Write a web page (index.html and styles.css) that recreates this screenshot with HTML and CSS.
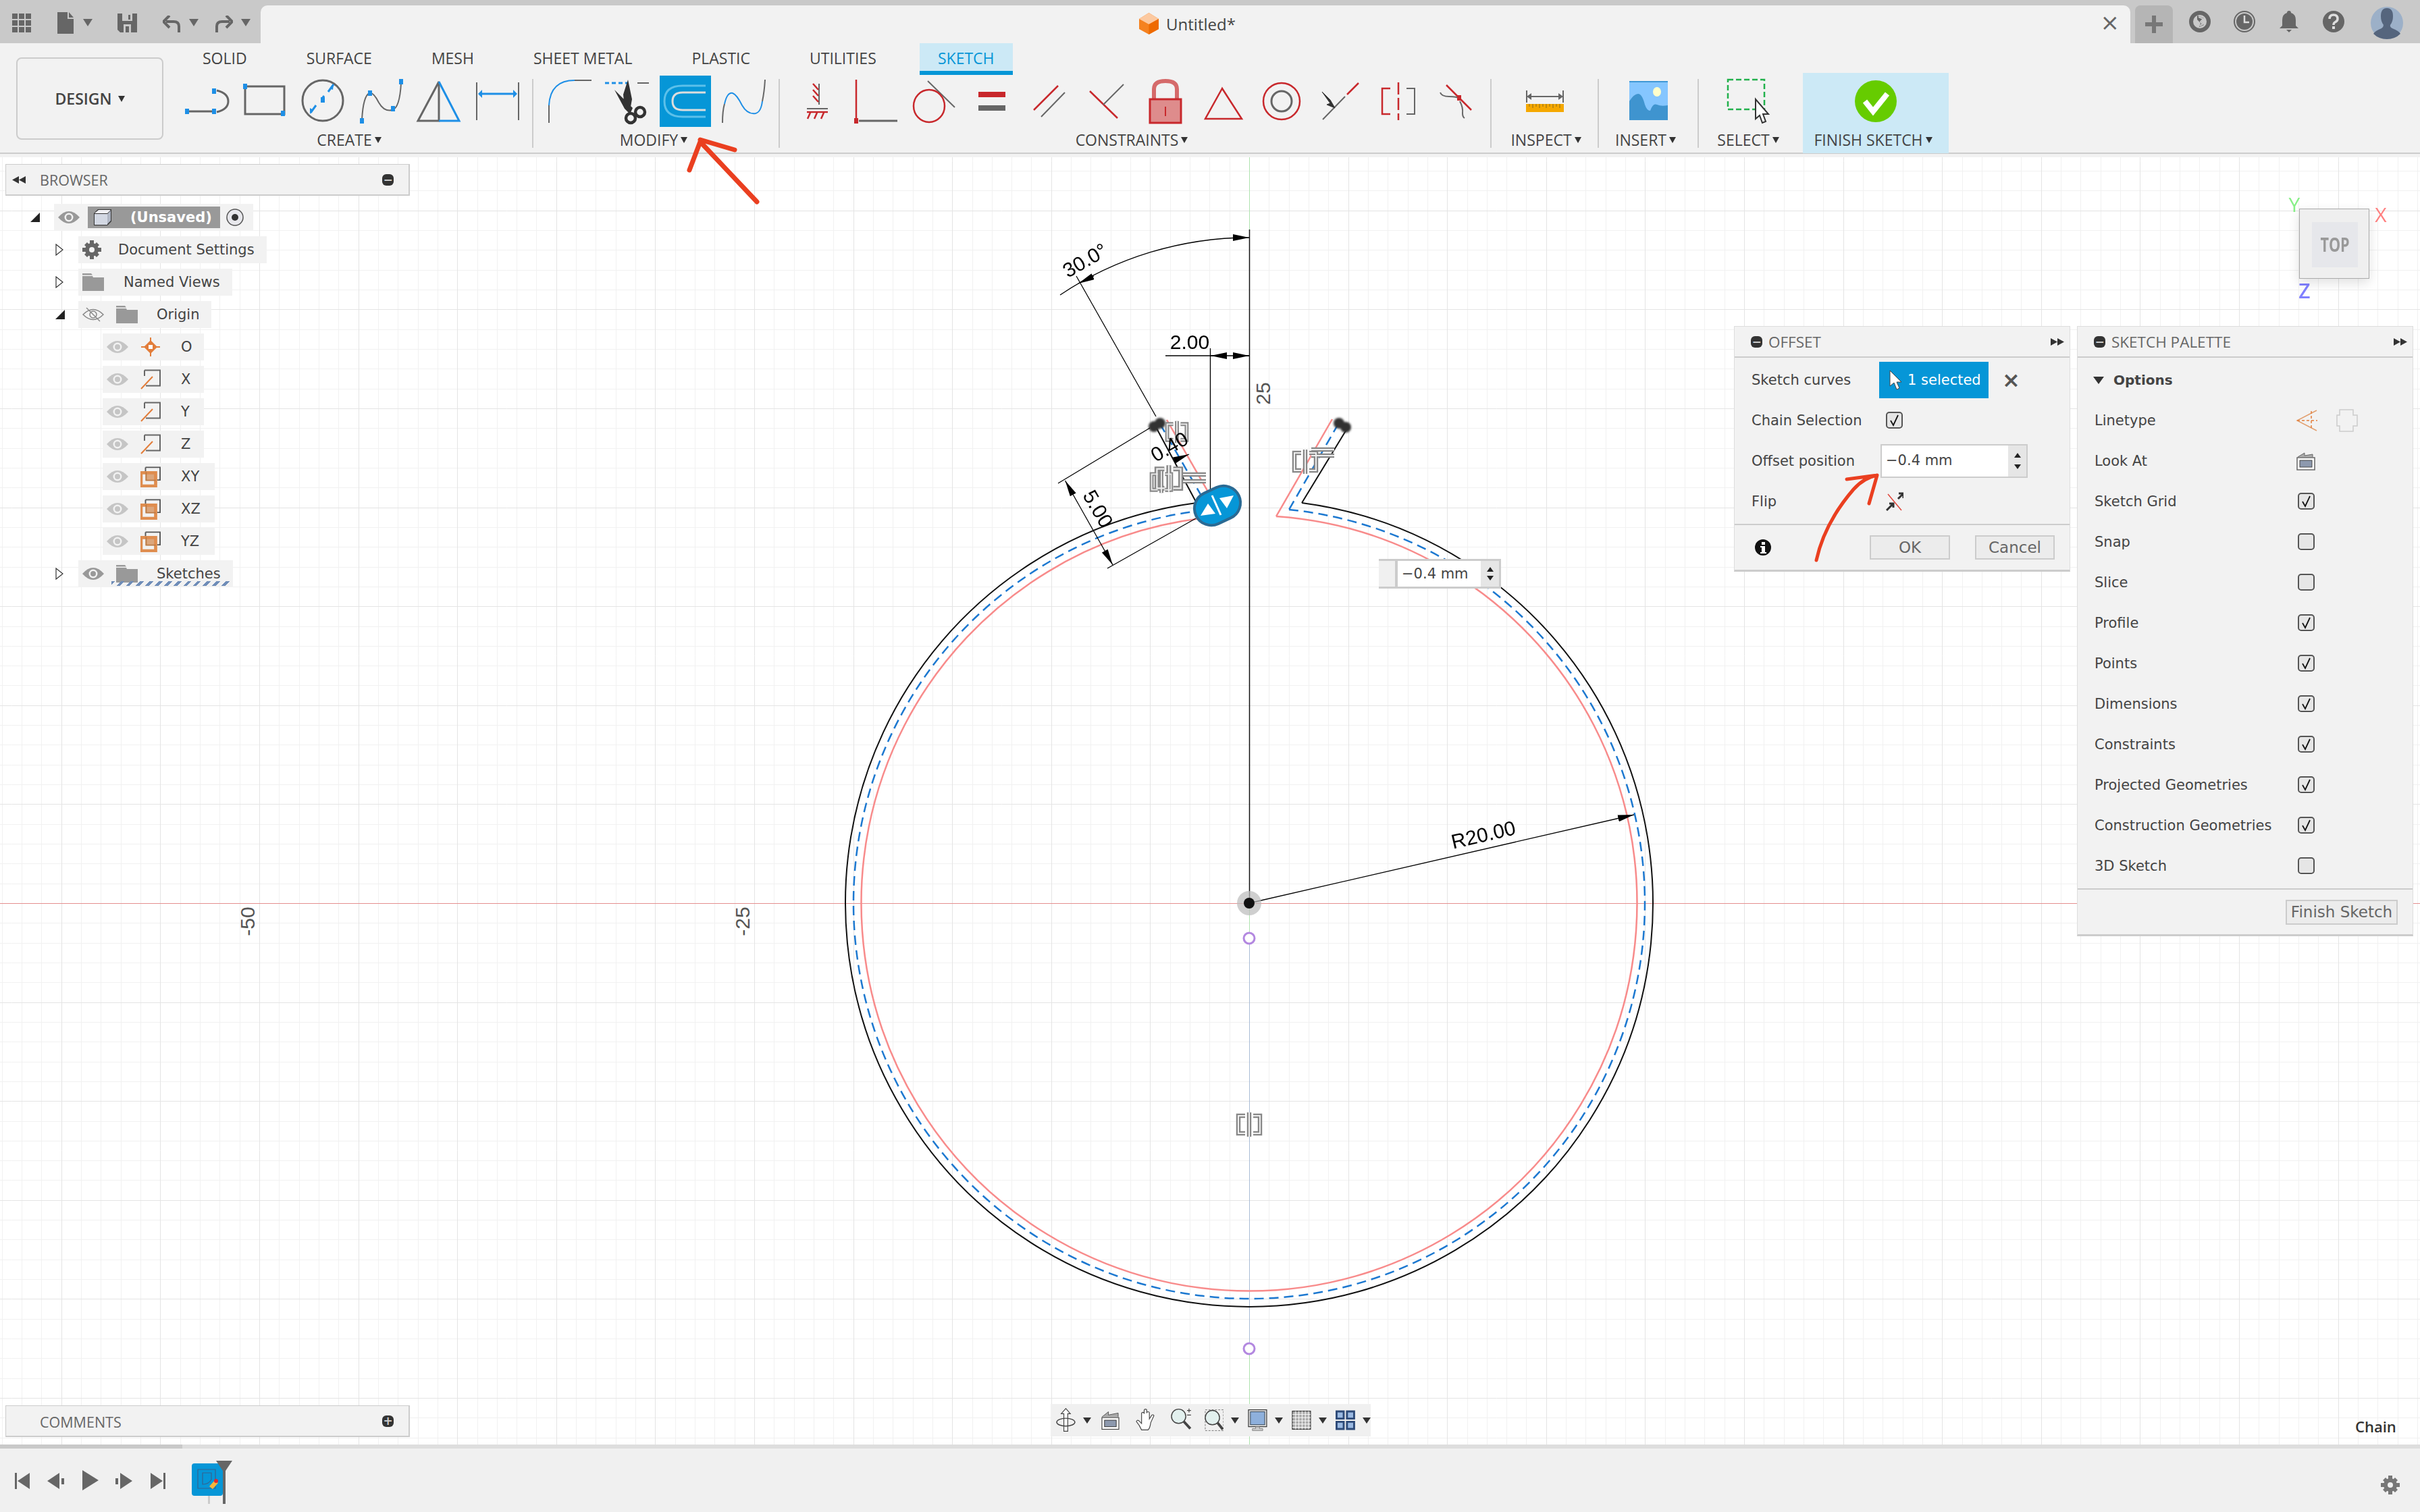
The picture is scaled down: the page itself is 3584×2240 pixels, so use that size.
FILE: index.html
```html
<!DOCTYPE html>
<html lang="en">
<head>
    <meta charset="UTF-8">
    <title>Untitled* - Sketch</title>
    <link rel="stylesheet" href="styles.css">
</head>
<body>
    <svg class="sprite" xmlns="http://www.w3.org/2000/svg">
        <symbol id="eye" viewBox="0 0 32 20"><path d="M0 10Q16-8 32 10Q16 28 0 10Z" fill="currentColor"/><circle cx="16" cy="10" r="6.500" fill="#f2f2f2"/><circle cx="16" cy="10" r="4" fill="currentColor"/></symbol>
        <symbol id="folder" viewBox="0 0 32 26"><path d="M0 0h13l2 2.500H0zM0 4h15l1 2h16v20H0z" fill="#999"/></symbol>
        <symbol id="axis" viewBox="0 0 30 30"><path d="M6 1.500h23v23H8" fill="none" stroke="#666" stroke-width="2"/><path d="M6 1.500V10" fill="none" stroke="#666" stroke-width="2"/><path d="M1 29L18 11" stroke="#e27d3a" stroke-width="2"/></symbol>
        <symbol id="plane" viewBox="0 0 32 32"><path d="M8 1.500h23v20h-5M8 1.500V8" fill="none" stroke="#555" stroke-width="2"/><rect x="8" y="8" width="16" height="14" fill="#dba67c"/><rect x="1" y="10" width="23" height="21" fill="none" stroke="#df8d4f" stroke-width="5"/><path d="M9 9v13h15" fill="none" stroke="#bb7a45" stroke-width="2"/></symbol>
        <symbol id="check" viewBox="0 0 25 25"><path d="M7 13l4 7 7-15" fill="none" stroke="#111" stroke-width="1.800"/></symbol>
        <symbol id="skip" viewBox="0 0 12 12"><path d="M6 1L0 6l6 5zM12 1L6 6l6 5z" fill="#333"/></symbol>
    </svg>

    <div class="titlebar">
        <div class="quick">
            <svg class="q-grid" width="28" height="28" viewBox="0 0 28 28"><path d="M0 0h8v8H0zM10 0h8v8h-8zM20 0h8v8h-8zM0 10h8v8H0zM10 10h8v8h-8zM20 10h8v8h-8zM0 20h8v8H0zM10 20h8v8h-8zM20 20h8v8h-8z" fill="#666"/></svg>
            <svg class="q-file" width="26" height="32" viewBox="0 0 26 32"><path d="M0 0h15v10h9v22H0zM17 0l7 8h-7z" fill="#666"/></svg>
            <span class="caret"></span>
            <svg class="q-save" width="29" height="28" viewBox="0 0 29 28"><path d="M0 0h29v28H4l-4-4z" fill="#666"/><path d="M7 0h15v11H7zM9 16h11v12h-3V19h-5v9H9z" fill="#c9c9c9"/><rect x="16" y="2" width="3" height="7" fill="#666"/></svg>
            <svg class="q-undo" width="27" height="26" viewBox="0 0 27 26"><path d="M24 25V16q0-7-8-7H5" fill="none" stroke="#666" stroke-width="4"/><path d="M10 0L1 9l9 9" fill="none" stroke="#666" stroke-width="4"/></svg>
            <span class="caret"></span>
            <svg class="q-redo" width="27" height="26" viewBox="0 0 27 26"><path d="M3 25V16q0-7 8-7h11" fill="none" stroke="#666" stroke-width="4"/><path d="M17 0l9 9-9 9" fill="none" stroke="#666" stroke-width="4"/></svg>
            <span class="caret"></span>
        </div>
        <div class="doc-tab">
            <span></span>
            <div class="doc-title">
                <svg width="29" height="32" viewBox="0 0 29 32"><path d="M14.500 0L29 9v15l-14.500 8L0 24V9z" fill="#f58220"/><path d="M14.500 0L29 9l-14.500 8L0 9z" fill="#fcc9a0"/><path d="M14.500 17L29 9v15l-14.500 8z" fill="#ee6a00"/></svg>
                <span>Untitled*</span>
            </div>
            <span class="doc-close">×</span>
        </div>
        <div class="title-right">
            <div class="plus-tab"><svg width="26" height="26" viewBox="0 0 26 26"><path d="M10 0h6v10h10v6H16v10h-6V16H0v-6h10z" fill="#777"/></svg></div>
            <svg class="t-icon t-first" width="32" height="32" viewBox="0 0 32 32"><circle cx="16" cy="16" r="13" fill="none" stroke="#666" stroke-width="6"/><path d="M12 7l10 4-4 5 4 5-7 3 2-6-5-5z" fill="#666"/><path d="M14 9l7 3-4 4 3 4-4 2" fill="none" stroke="#c9c9c9" stroke-width="2"/></svg>
            <svg class="t-icon" width="32" height="32" viewBox="0 0 32 32"><circle cx="16" cy="16" r="15" fill="none" stroke="#666" stroke-width="2"/><circle cx="16" cy="16" r="12" fill="#666"/><path d="M16 7v10h7" fill="none" stroke="#ddd" stroke-width="2.500"/></svg>
            <svg class="t-icon" width="32" height="32" viewBox="0 0 32 32"><path d="M16 0q3 0 3 3 7 2 7 11v8l4 4H2l4-4v-8q0-9 7-11 0-3 3-3zM12 28h8l-4 4z" fill="#666"/></svg>
            <svg class="t-icon" width="32" height="32" viewBox="0 0 32 32"><circle cx="16" cy="16" r="16" fill="#666"/><path d="M10 12q0-6 6-6t6 6q0 3-4 5-2 1-2 4" fill="none" stroke="#ddd" stroke-width="3.500"/><rect x="14" y="23" width="4" height="4" fill="#ddd"/></svg>
            <svg class="t-avatar" width="48" height="48" viewBox="0 0 48 48"><circle cx="24" cy="24" r="24" fill="#9cb0c8"/><path d="M15 14q0-12 9-12t9 12q0 8-4 13-1 3 3 5 10 4 12 8-8 8-20 8T4 40q2-4 12-8 3-2 3-5-4-5-4-13z" fill="#55657d"/></svg>
        </div>
    </div>

    <div class="toolbar">
        <button class="design-btn">DESIGN<span class="caret caret-dark"></span></button>
        <div class="toolbar-main">
            <div class="tabs">
                <span class="tab">SOLID</span>
                <span class="tab">SURFACE</span>
                <span class="tab">MESH</span>
                <span class="tab">SHEET METAL</span>
                <span class="tab">PLASTIC</span>
                <span class="tab">UTILITIES</span>
                <span class="tab tab-active">SKETCH</span>
            </div>
            <div class="ribbon">
                <div class="group group-create">
                    <div class="tools">
                        <div class="tool"><svg class="ico" viewBox="0 0 76 76"><path class="ln" d="M9 53h40M53 22Q70 26 70 38T53 54"/><path class="sq" d="M6 49h6v8H6zM46 49h6v8h-6zM46 19h6v8h-6z"/></svg></div>
                        <div class="tool"><svg class="ico" viewBox="0 0 76 76"><path class="ln" d="M12 16h55v41H9V18"/><path class="sq" d="M6 12h6v8H6zM62 52h6v8h-6z"/></svg></div>
                        <div class="tool"><svg class="ico" viewBox="0 0 76 76"><circle class="ln" cx="38" cy="37" r="30"/><path class="bl" d="M20 55l8-11M36 35l4-5M46 24l8-11"/><path class="sq" d="M35 32h6v8h-6zM19 48l5 3-5 6zM48 19l6-6-1 8z"/></svg></div>
                        <div class="tool"><svg class="ico" viewBox="0 0 76 76"><path class="ln ln-thin" d="M10 65Q12 30 21 26q6-2 14 14 8 14 20 11 11-3 13-40"/><path class="sq" d="M7 63h6v8H7zM19 22h6v8h-6zM53 45h6v8h-6zM65 5h6v8h-6z"/></svg></div>
                        <div class="tool"><svg class="ico" viewBox="0 0 76 76"><path class="ln" d="M38 9L7 67h31zM38 9v58"/><path class="bl" d="M38 9l30 58H38"/></svg></div>
                        <div class="tool"><svg class="ico" viewBox="0 0 76 76"><path class="ln ln-thin" d="M8 10v56M70 10v56"/><path class="bl" d="M14 27h50"/><path class="sq" d="M10 27l6-6v12zM68 27l-6-6v12z"/></svg></div>
                    </div>
                    <div class="group-label">CREATE<span class="caret caret-dark"></span></div>
                </div>
                <div class="sep sep-create"></div>
                <div class="group group-modify">
                    <div class="tools">
                        <div class="tool"><svg class="ico" viewBox="0 0 76 76"><path class="ln ln-thin" d="M46 7h25M8 44v26"/><path class="bl bl-thin" d="M46 7Q10 7 8 44"/></svg></div>
                        <div class="tool"><svg class="ico" viewBox="0 0 76 76"><path class="bl" stroke-dasharray="6 4" d="M5 11h34"/><path class="ln ln-thin" d="M53 11h17"/><path d="M39 6l6 29-3 17-8-4-2-20zM19 21l27 27-4 9-8-8z" fill="#333"/><circle cx="43" cy="63" r="7" fill="none" stroke="#333" stroke-width="4.500"/><circle cx="57" cy="54" r="7" fill="none" stroke="#333" stroke-width="4.500"/></svg></div>
                        <div class="tool"><svg class="ico active" viewBox="0 0 76 76"><path d="M68 15H34Q7 15 7 38T34 61h34" fill="none" stroke="#5cc0ea" stroke-width="3"/><path d="M68 25H34Q19 25 19 38T34 51h34" fill="none" stroke="#ddd" stroke-width="3"/></svg></div>
                        <div class="tool"><svg class="ico" viewBox="0 0 76 76"><path class="ln ln-thin" d="M7 70Q7 52 10 42M66 38Q69 24 70 6"/><path class="bl bl-thin" d="M10 42Q14 24 22 26q6 2 14 18 8 14 20 12 8-2 10-18"/></svg></div>
                    </div>
                    <div class="group-label">MODIFY<span class="caret caret-dark"></span></div>
                </div>
                <div class="sep sep-modify"></div>
                <div class="group group-constraints">
                    <div class="tools">
                        <div class="tool"><svg class="ico" viewBox="0 0 76 76"><path class="ln ln-thin" d="M41 12v31M23 49h31"/><path class="rd" d="M32 12l8 9M32 21l8 9M32 30l8 9M23 54h31M28 55l-4 9M38 55l-4 9M48 55l-4 9"/></svg></div>
                        <div class="tool"><svg class="ico" viewBox="0 0 76 76"><path class="rd" d="M10 6v58"/><path class="ln" d="M14 67h57"/><path d="M7 63h6v8H7z" fill="#c8282c"/></svg></div>
                        <div class="tool"><svg class="ico" viewBox="0 0 76 76"><path class="ln ln-thin" d="M30 8l40 39"/><ellipse class="rd" cx="32" cy="45" rx="23" ry="24"/></svg></div>
                        <div class="tool"><svg class="ico" viewBox="0 0 76 76"><path d="M19 24h40v8H19z" fill="#c8282c"/><path d="M19 44h40v8H19z" fill="#666"/></svg></div>
                        <div class="tool"><svg class="ico" viewBox="0 0 76 76"><path class="rd" d="M15 51l36-36"/><path class="ln ln-thin" d="M26 61l35-36"/></svg></div>
                        <div class="tool"><svg class="ico" viewBox="0 0 76 76"><path class="rd" d="M12 23l41 40"/><path class="ln ln-thin" d="M32 43l30-30"/></svg></div>
                        <div class="tool"><svg class="ico" viewBox="0 0 76 76"><path d="M21 34V20q0-12 17-12t17 12v14" fill="none" stroke="#d56a6a" stroke-width="6"/><path d="M15 35h46v35H15z" fill="#de8c8c" stroke="#c8282c" stroke-width="3"/><path d="M38 46v14" stroke="#c8282c" stroke-width="2"/></svg></div>
                        <div class="tool"><svg class="ico" viewBox="0 0 76 76"><path class="rd" d="M36 19L11 64h54z"/></svg></div>
                        <div class="tool"><svg class="ico" viewBox="0 0 76 76"><circle class="rd" cx="38" cy="38" r="27"/><circle class="ln" cx="38" cy="38" r="15"/></svg></div>
                        <div class="tool"><svg class="ico" viewBox="0 0 76 76"><path class="rd" d="M49 28l17-17"/><path class="ln ln-thin" d="M13 65l33-34"/><path d="M12 24l12 12 7 12-12-5 5-2z" fill="#333" stroke="#333"/></svg></div>
                        <div class="tool"><svg class="ico" viewBox="0 0 76 76"><path class="rd" stroke-dasharray="18 5" d="M39 10v56"/><path class="rd" d="M27 19H15v38h12"/><path class="ln ln-thin" d="M51 19h12v38H51"/></svg></div>
                        <div class="tool"><svg class="ico" viewBox="0 0 76 76"><path class="rd" d="M24 14l37 37"/><path class="ln ln-thin" d="M15 25q2 6 13 6 12 0 15 3M44 38q5 9 4 18 0 5 3 7"/><path d="M40 29h6v8h-6z" fill="#c8282c"/></svg></div>
                    </div>
                    <div class="group-label">CONSTRAINTS<span class="caret caret-dark"></span></div>
                </div>
                <div class="sep sep-constraints"></div>
                <div class="group group-inspect">
                    <div class="tools">
                        <div class="tool"><svg class="ico" viewBox="0 0 76 76"><path class="ln ln-thin" d="M11 22v18M65 22v18M16 31h44"/><path d="M11 31l7-5v10zM65 31l-7-5v10z" fill="#666"/><path d="M10 42h56v12H10z" fill="#f5a800"/><path d="M15 42v4M20 42v6M25 42v4M30 42v6M35 42v4M40 42v6M45 42v4M50 42v6M55 42v4M60 42v6" stroke="#8a6a20" stroke-width="1"/></svg></div>
                    </div>
                    <div class="group-label">INSPECT<span class="caret caret-dark"></span></div>
                </div>
                <div class="sep"></div>
                <div class="group group-insert">
                    <div class="tools">
                        <div class="tool"><svg class="ico" viewBox="0 0 76 76"><path d="M10 8h57v58H10z" fill="#85c6ff"/><path d="M10 8h57v2H10z" fill="#3e97d5"/><ellipse cx="51" cy="24" rx="6" ry="7" fill="#ffffcc"/><path d="M10 66V38q7-11 13-11t10 16q3 9 8 9 4-12 10-9 6 3 16 1v22z" fill="#3f94cf"/></svg></div>
                    </div>
                    <div class="group-label">INSERT<span class="caret caret-dark"></span></div>
                </div>
                <div class="sep"></div>
                <div class="group group-select">
                    <div class="tools">
                        <div class="tool"><svg class="ico" viewBox="0 0 76 76"><path d="M4 6h54v44H4z" fill="none" stroke="#22b14c" stroke-width="2.500" stroke-dasharray="8 4"/><path d="M45 35v29l6-5 4 11 5-2-4-11h8z" fill="#fff" stroke="#333" stroke-width="2"/></svg></div>
                    </div>
                    <div class="group-label">SELECT<span class="caret caret-dark"></span></div>
                </div>
                <div class="group group-finish">
                    <div class="tools">
                        <div class="tool"><svg class="ico" viewBox="0 0 76 76"><circle cx="38" cy="38" r="31" fill="#66cc00"/><path d="M22 38l12 15 21-26" fill="none" stroke="#fff" stroke-width="8"/></svg></div>
                    </div>
                    <div class="group-label">FINISH SKETCH<span class="caret caret-dark"></span></div>
                </div>
            </div>
        </div>
    </div>

    <div class="viewport">
        <svg class="canvas" width="3584" height="1907" viewBox="0 233 3584 1907">
            <defs>
                <pattern id="grid" patternUnits="userSpaceOnUse" x="1850" y="1338" width="733" height="733">
                    <path class="grid-minor" d="M29.500 0V733M59.500 0V733M88.500 0V733M117.500 0V733M176.500 0V733M205.500 0V733M235.500 0V733M264.500 0V733M323.500 0V733M352.500 0V733M381.500 0V733M410.500 0V733M469.500 0V733M498.500 0V733M528.500 0V733M557.500 0V733M616.500 0V733M645.500 0V733M674.500 0V733M704.500 0V733M0 29.500H733M0 59.500H733M0 88.500H733M0 117.500H733M0 176.500H733M0 205.500H733M0 235.500H733M0 264.500H733M0 323.500H733M0 352.500H733M0 381.500H733M0 410.500H733M0 469.500H733M0 498.500H733M0 528.500H733M0 557.500H733M0 616.500H733M0 645.500H733M0 674.500H733M0 704.500H733"/>
                    <path class="grid-major" d="M0.500 0V733M147.500 0V733M293.500 0V733M440.500 0V733M586.500 0V733M0 0.500H733M0 147.500H733M0 293.500H733M0 440.500H733M0 586.500H733"/>
                </pattern>
                <marker id="tip" markerUnits="userSpaceOnUse" markerWidth="24" markerHeight="10" refX="24" refY="5" orient="auto-start-reverse"><path d="M0 0L24 5L0 10z" fill="#000"/></marker>
                <filter id="soft"><feGaussianBlur stdDeviation="1.500"/></filter>
                <filter id="soft-glyph"><feGaussianBlur stdDeviation=".6"/></filter>
                <g id="glyph-bracket">
                    <path d="M-6 -13h-10v26h10M6 -13h10v26H6M0 -18v36"/>
                </g>
                <g id="glyph-set">
                    <use href="#glyph-bracket" transform="translate(1743 640) scale(.9)"/>
                    <use href="#glyph-bracket" transform="translate(1731 709) scale(1.100)"/>
                    <use href="#glyph-bracket" transform="translate(1720 714) scale(.9)"/>
                    <use href="#glyph-bracket" transform="translate(1933 684)"/>
                    <use href="#glyph-bracket" transform="translate(1850 1666)"/>
                    <path d="M1752 703h34M1752 713h34M1942 666h34M1942 675h34"/>
                </g>
            </defs>
            <rect x="0" y="233" width="3584" height="1907" fill="url(#grid)"/>

            <path class="axis-x" d="M0 1338.500H3584"/>
            <path class="axis-y" d="M1850.500 233V2140"/>
            <path class="axis-line" d="M1850.500 340V1338"/>
            <path class="axis-guide" d="M1850.500 1398V1990"/>

            <text class="axis-label" transform="translate(366 1365) rotate(-90)">-50</text>
            <text class="axis-label" transform="translate(1099 1365) rotate(-90)">-25</text>
            <text class="axis-label" transform="translate(1870 583) rotate(-90)">25</text>

            <path class="curve-red" d="M1728 622L1810 765M1973 621L1890 765M1890 765A574.500 574.500 0 1 1 1810 765"/>
            <path class="curve-blue" d="M1718 628L1791 755M1982 628L1909 755M1909 755A586 586 0 1 1 1791 755"/>
            <path class="curve-black" d="M1711 631L1772 745M1995 635L1928 745M1928 745A598 598 0 1 1 1772 745"/>

            <g filter="url(#soft)" fill="#333">
                <circle cx="1709" cy="632" r="8"/><circle cx="1718" cy="627" r="8"/>
                <circle cx="1983" cy="627" r="8"/><circle cx="1993" cy="633" r="8"/>
            </g>

            <g filter="url(#soft-glyph)">
                <use class="glyphs-out" href="#glyph-set"/>
                <use class="glyphs-in" href="#glyph-set"/>
            </g>

            <path class="dim" d="M1570 437A504 504 0 0 1 1850 352" marker-end="url(#tip)"/>
            <path class="dim" d="M1594 409L1712 617"/>
            <path class="dim" d="M1620 409L1597 420" marker-end="url(#tip)"/>
            <text class="dim-text" transform="translate(1607 386) rotate(-30)" dy="10">30.0°</text>
            <path class="dim" d="M1726 527H1850"/>
            <path class="dim dim-thin" d="M1792.500 516V727"/>
            <path class="dim" d="M1816 527L1793 527" marker-end="url(#tip)"/>
            <path class="dim" d="M1827 527L1850 527" marker-end="url(#tip)"/>
            <text class="dim-text" x="1762" y="517">2.00</text>
            <path class="dim" d="M1648 837L1577.500 712" marker-start="url(#tip)" marker-end="url(#tip)"/>
            <path class="dim" d="M1567 716L1703 634M1640 842L1771 768"/>
            <text class="dim-text" transform="translate(1626 754) rotate(60)" dy="10">5.00</text>
            <text class="dim-text" transform="translate(1732 662) rotate(-30)" dy="10">0.40</text>
            <path class="dim" d="M1739 682L1761 673" marker-end="url(#tip)"/>
            <path class="dim" d="M1850 1338L2420 1207" marker-end="url(#tip)"/>
            <text class="dim-text" transform="translate(2197 1237) rotate(-13)" dy="10">R20.00</text>

            <g>
                <rect x="-35" y="-25" width="70" height="50" rx="25" fill="#0696d7" stroke="#2b6a93" stroke-width="4" transform="translate(1803 749) rotate(-25)"/>
                <path d="M1795 734L1808 763" stroke="#fff" stroke-width="3"/>
                <path d="M1789 746L1778 764L1800 761z" fill="#fff"/>
                <path d="M1817 753L1806 738L1827 734z" fill="#fff"/>
            </g>

            <circle cx="1850" cy="1338" r="18" fill="#bbb" opacity=".7"/>
            <circle cx="1850" cy="1338" r="8" fill="#111"/>
            <circle cx="1850" cy="1390" r="8" class="purple-pt"/>
            <circle cx="1850" cy="1998" r="8" class="purple-pt"/>

            <g class="cube-axes">
                <text class="axis-y-label" x="3398" y="314">Y</text>
                <text class="axis-x-label" x="3526" y="329">X</text>
                <text class="axis-z-label" x="3413" y="442">Z</text>
            </g>
        </svg>

        <div class="view-cube"><div class="view-face"><span>TOP</span></div></div>

        <div class="browser">
            <div class="browser-head">
                <svg class="head-skip" width="20" height="13" viewBox="0 0 12 12" preserveAspectRatio="none"><use href="#skip"/></svg>
                <span class="head-text">BROWSER</span>
                <span class="round-btn">−</span>
            </div>
            <div class="tree">
                <div class="tree-row level0">
                    <span class="twist"><svg width="14" height="14" viewBox="0 0 14 14"><path d="M14 0V14H0z" fill="#222"/></svg></span>
                    <div class="item item-root">
                        <svg class="eye" width="32" height="20"><use href="#eye"/></svg>
                        <div class="item-selected">
                            <svg width="26" height="24" viewBox="0 0 26 24"><path d="M6 0h20v18l-6 6H0V6z" fill="#333"/><path d="M1 7h19v16H1z" fill="#d3d8e3"/><path d="M1 6l6-5h18l-5 5z" fill="#f0f0f4"/><path d="M20 7l5-5v15l-5 5z" fill="#b0b6c4"/></svg>
                            <span>(Unsaved)</span>
                        </div>
                        <svg class="radio" width="26" height="26" viewBox="0 0 26 26"><circle cx="13" cy="13" r="12" fill="#e8e8ec" stroke="#555" stroke-width="1.500"/><circle cx="13" cy="13" r="5" fill="#333"/></svg>
                    </div>
                </div>
                <div class="tree-row level1">
                    <span class="twist"><svg width="12" height="18" viewBox="0 0 12 18"><path d="M1 1V17L11 9z" fill="#fff" stroke="#333" stroke-width="1.200"/></svg></span>
                    <div class="item">
                        <svg class="gear" width="28" height="28" viewBox="0 0 28 28"><g fill="#666"><circle cx="14" cy="14" r="10"/><path d="M11 0h6v5h-6zM11 23h6v5h-6zM0 11h5v6H0zM23 11h5v6h-5zM3 7l4-4 4 4-4 4zM17 7l4-4 4 4-4 4zM3 21l4 4 4-4-4-4zM17 21l4 4 4-4-4-4z"/></g><circle cx="14" cy="14" r="4" fill="#f2f2f2"/></svg>
                        <span class="item-text">Document Settings</span>
                    </div>
                </div>
                <div class="tree-row level1">
                    <span class="twist"><svg width="12" height="18" viewBox="0 0 12 18"><path d="M1 1V17L11 9z" fill="#fff" stroke="#333" stroke-width="1.200"/></svg></span>
                    <div class="item">
                        <svg class="folder-first" width="32" height="26"><use href="#folder"/></svg>
                        <span class="item-text">Named Views</span>
                    </div>
                </div>
                <div class="tree-row level1">
                    <span class="twist"><svg width="14" height="14" viewBox="0 0 14 14"><path d="M14 0V14H0z" fill="#222"/></svg></span>
                    <div class="item">
                        <svg class="eye" width="32" height="24" viewBox="0 0 32 24"><path d="M1 12Q16-3 31 12Q16 27 1 12Z" fill="none" stroke="#888" stroke-width="1.500"/><circle cx="16" cy="12" r="5" fill="none" stroke="#888" stroke-width="1.500"/><path d="M6 2l20 20" stroke="#888" stroke-width="1.500"/></svg>
                        <svg class="folder" width="32" height="26"><use href="#folder"/></svg>
                        <span class="item-text">Origin</span>
                    </div>
                </div>
                <div class="tree-row level2">
                    <div class="item leaf">
                        <svg class="eye eye-off" width="32" height="20"><use href="#eye"/></svg>
                        <svg class="leaf-icon" width="30" height="30" viewBox="0 0 30 30"><path d="M15 1v28M1 15h28" stroke="#e27d3a" stroke-width="2"/><path d="M15 5L25 15 15 25 5 15z" fill="#e27d3a"/><rect x="12" y="12" width="6" height="6" fill="#fff"/></svg>
                        <span class="item-text">O</span>
                    </div>
                </div>
                <div class="tree-row level2">
                    <div class="item leaf">
                        <svg class="eye eye-off" width="32" height="20"><use href="#eye"/></svg>
                        <svg class="leaf-icon" width="30" height="30"><use href="#axis"/></svg>
                        <span class="item-text">X</span>
                    </div>
                </div>
                <div class="tree-row level2">
                    <div class="item leaf">
                        <svg class="eye eye-off" width="32" height="20"><use href="#eye"/></svg>
                        <svg class="leaf-icon" width="30" height="30"><use href="#axis"/></svg>
                        <span class="item-text">Y</span>
                    </div>
                </div>
                <div class="tree-row level2">
                    <div class="item leaf">
                        <svg class="eye eye-off" width="32" height="20"><use href="#eye"/></svg>
                        <svg class="leaf-icon" width="30" height="30"><use href="#axis"/></svg>
                        <span class="item-text">Z</span>
                    </div>
                </div>
                <div class="tree-row level2">
                    <div class="item leaf leaf-wide">
                        <svg class="eye eye-off" width="32" height="20"><use href="#eye"/></svg>
                        <svg class="leaf-icon" width="30" height="32"><use href="#plane"/></svg>
                        <span class="item-text">XY</span>
                    </div>
                </div>
                <div class="tree-row level2">
                    <div class="item leaf leaf-wide">
                        <svg class="eye eye-off" width="32" height="20"><use href="#eye"/></svg>
                        <svg class="leaf-icon" width="30" height="32"><use href="#plane"/></svg>
                        <span class="item-text">XZ</span>
                    </div>
                </div>
                <div class="tree-row level2">
                    <div class="item leaf leaf-wide">
                        <svg class="eye eye-off" width="32" height="20"><use href="#eye"/></svg>
                        <svg class="leaf-icon" width="30" height="32"><use href="#plane"/></svg>
                        <span class="item-text">YZ</span>
                    </div>
                </div>
                <div class="tree-row level1">
                    <span class="twist"><svg width="12" height="18" viewBox="0 0 12 18"><path d="M1 1V17L11 9z" fill="#fff" stroke="#333" stroke-width="1.200"/></svg></span>
                    <div class="item item-wavy">
                        <svg class="eye" width="32" height="20"><use href="#eye"/></svg>
                        <svg class="folder" width="32" height="26"><use href="#folder"/></svg>
                        <span class="item-text">Sketches</span>
                    </div>
                </div>
            </div>
        </div>

        <div class="comments">
            <span class="head-text">COMMENTS</span>
            <span class="round-btn">+</span>
        </div>

        <div class="panel panel-offset">
            <div class="panel-head">
                <span class="round-btn">−</span>
                <span class="panel-title">OFFSET</span>
                <svg class="head-expand" width="20" height="13" viewBox="0 0 12 12" preserveAspectRatio="none"><use href="#skip" transform="translate(12 0) scale(-1 1)"/></svg>
            </div>
            <div class="panel-body">
                <div class="form-row">
                    <span class="form-label">Sketch curves</span>
                    <div class="selected-btn">
                        <svg width="20" height="30" viewBox="0 0 20 30"><path d="M2 1v23l6-5 4 10 4-2-4-9h7z" fill="#fff" stroke="#444" stroke-width="1"/></svg>
                        <span>1 selected</span>
                    </div>
                    <span class="clear-x">×</span>
                </div>
                <div class="form-row">
                    <span class="form-label">Chain Selection</span>
                    <span class="checkbox check-offset"><svg width="25" height="25"><use href="#check"/></svg></span>
                </div>
                <div class="form-row">
                    <span class="form-label">Offset position</span>
                    <div class="num-input">
                        <span class="num-value">−0.4 mm</span>
                        <div class="spinner"><span class="spin-up"></span><span class="spin-down"></span></div>
                    </div>
                </div>
                <div class="form-row">
                    <span class="form-label">Flip</span>
                    <svg class="flip" width="26" height="28" viewBox="0 0 26 28"><path d="M1 27l9-9M5 17h6v6M25 3l-7 7M19 2h7v7" fill="none" stroke="#333" stroke-width="3"/><path d="M3 3l20 24" stroke="#e0453a" stroke-width="1.500"/></svg>
                </div>
            </div>
            <div class="panel-foot panel-foot-offset">
                <svg class="info" width="24" height="24" viewBox="0 0 24 24"><circle cx="12" cy="12" r="12" fill="#111"/><rect x="10" y="4" width="5" height="4" fill="#fff"/><path d="M8 10h7v9h2v2H8v-2h2v-7H8z" fill="#fff"/></svg>
                <button class="btn btn-ok">OK</button>
                <button class="btn btn-cancel">Cancel</button>
            </div>
        </div>

        <div class="panel panel-palette">
            <div class="panel-head">
                <span class="round-btn">−</span>
                <span class="panel-title">SKETCH PALETTE</span>
                <svg class="head-expand" width="20" height="13" viewBox="0 0 12 12" preserveAspectRatio="none"><use href="#skip" transform="translate(12 0) scale(-1 1)"/></svg>
            </div>
            <div class="panel-body">
                <div class="form-row palette-row options-row"><span class="options-tri"></span><b>Options</b></div>
                <div class="form-row palette-row"><span class="form-label">Linetype</span>
                    <svg class="linetype" width="34" height="34" viewBox="0 0 34 34"><path d="M32 2L3 17l29 15" fill="none" stroke="#e2a070" stroke-width="1.500"/><path d="M3 17h30M24 3v28" fill="none" stroke="#e27d3a" stroke-width="1.500" stroke-dasharray="4 3"/></svg>
                    <svg class="linetype linetype-2" width="34" height="34" viewBox="0 0 34 34"><path d="M6 1h20v8h6v16h-6v8H6v-8H2V9h4z" fill="none" stroke="#ccc" stroke-width="1.500"/></svg>
                </div>
                <div class="form-row palette-row"><span class="form-label">Look At</span>
                    <svg class="lookat" width="28" height="28" viewBox="0 0 28 28"><path d="M2 8l10-6v4l12-2v4" fill="#aaa" stroke="#666"/><rect x="1" y="9" width="26" height="18" fill="#fff" stroke="#666" stroke-width="1.500"/><rect x="5" y="13" width="18" height="10" fill="#8d99ae" stroke="#444"/></svg>
                </div>
                <div class="form-row palette-row"><span class="form-label">Sketch Grid</span><span class="checkbox"><svg width="25" height="25"><use href="#check"/></svg></span></div>
                <div class="form-row palette-row"><span class="form-label">Snap</span><span class="checkbox"></span></div>
                <div class="form-row palette-row"><span class="form-label">Slice</span><span class="checkbox"></span></div>
                <div class="form-row palette-row"><span class="form-label">Profile</span><span class="checkbox"><svg width="25" height="25"><use href="#check"/></svg></span></div>
                <div class="form-row palette-row"><span class="form-label">Points</span><span class="checkbox"><svg width="25" height="25"><use href="#check"/></svg></span></div>
                <div class="form-row palette-row"><span class="form-label">Dimensions</span><span class="checkbox"><svg width="25" height="25"><use href="#check"/></svg></span></div>
                <div class="form-row palette-row"><span class="form-label">Constraints</span><span class="checkbox"><svg width="25" height="25"><use href="#check"/></svg></span></div>
                <div class="form-row palette-row"><span class="form-label">Projected Geometries</span><span class="checkbox"><svg width="25" height="25"><use href="#check"/></svg></span></div>
                <div class="form-row palette-row"><span class="form-label">Construction Geometries</span><span class="checkbox"><svg width="25" height="25"><use href="#check"/></svg></span></div>
                <div class="form-row palette-row"><span class="form-label">3D Sketch</span><span class="checkbox"></span></div>
            </div>
            <div class="panel-foot panel-foot-palette">
                <button class="btn btn-finish">Finish Sketch</button>
            </div>
        </div>

        <div class="num-input float-input">
            <span class="grip"></span>
            <span class="num-value">−0.4 mm</span>
            <div class="spinner"><span class="spin-up"></span><span class="spin-down"></span></div>
        </div>

        <div class="nav-bar">
            <svg class="nav-icon nav-orbit" width="30" height="36" viewBox="0 0 30 36"><path d="M15 0l7 8h-4v27h-6V8H8z" fill="#fff" stroke="#444" stroke-width="1.200"/><ellipse cx="15" cy="21" rx="14" ry="6" fill="none" stroke="#444" stroke-width="1.500"/></svg>
            <span class="caret caret-nav"></span>
            <svg class="nav-icon nav-look" width="28" height="30" viewBox="0 0 28 30"><path d="M1 10l10-8v5l15-3v6" fill="#aaa" stroke="#555"/><rect x="1" y="11" width="26" height="18" fill="#fff" stroke="#444" stroke-width="1.200"/><rect x="5" y="15" width="18" height="10" fill="#8d99ae" stroke="#333"/></svg>
            <svg class="nav-icon nav-hand" width="30" height="34" viewBox="0 0 30 34"><path d="M9 32Q6 25 1 19q1-3 4-1l4 4V7q0-2 2-2t2 2V2q0-2 2-2t2 2v4q0-2 2-2t2 2v9l4-6q2-1 3 1l-5 11q-1 8-4 11z" fill="#fff" stroke="#444" stroke-width="1.200"/></svg>
            <svg class="nav-icon nav-zoom" width="32" height="36" viewBox="0 0 32 36"><circle cx="12" cy="12" r="11" fill="#e2f0ee" stroke="#444" stroke-width="1.500"/><path d="M20 20l10 11" stroke="#444" stroke-width="4"/><path d="M25 3h6M28 0v6M25 10h6" stroke="#444" stroke-width="1.200"/></svg>
            <svg class="nav-icon nav-fit" width="30" height="34" viewBox="0 0 30 34"><rect x="1" y="1" width="28" height="32" fill="none" stroke="#777" stroke-dasharray="3 2"/><circle cx="12" cy="13" r="11" fill="#e2f0ee" stroke="#444" stroke-width="1.500"/><path d="M20 21l8 10" stroke="#444" stroke-width="4"/></svg>
            <span class="caret caret-nav"></span>
            <svg class="nav-icon nav-display" width="30" height="34" viewBox="0 0 30 34"><rect x="1" y="1" width="28" height="26" fill="#ddd" stroke="#333" stroke-width="1.200"/><rect x="4" y="4" width="22" height="20" fill="#8eb0dc" stroke="#345"/><path d="M12 27h6v3h5v3H7v-3h5z" fill="#ccc" stroke="#666" stroke-width=".7"/></svg>
            <span class="caret caret-nav"></span>
            <svg class="nav-icon nav-gridicon" width="30" height="30" viewBox="0 0 30 30"><rect x="1" y="1" width="28" height="28" fill="#aaa" stroke="#333" stroke-width="1.200"/><path d="M6 1v28M11 1v28M16 1v28M21 1v28M26 1v28M1 6h28M1 11h28M1 16h28M1 21h28M1 26h28" stroke="#fff"/></svg>
            <span class="caret caret-nav"></span>
            <svg class="nav-icon nav-views" width="30" height="30" viewBox="0 0 30 30"><path d="M0 0h14v14H0zM16 0h14v14H16zM0 16h14v14H0zM16 16h14v14H16z" fill="#2d4a78"/><path d="M3 3h8v8H3zM19 3h8v8h-8zM3 19h8v8H3zM19 19h8v8h-8z" fill="#9ab9e2"/></svg>
            <span class="caret caret-nav"></span>
        </div>

        <span class="mode-text">Chain</span>
    </div>

    <div class="timeline-progress"><span class="timeline-done"></span></div>
    <div class="timeline">
        <svg class="tl-btn tl-first" width="22" height="24" viewBox="0 0 22 24"><path d="M0 0h3v24H0zM22 0v24L4 12z" fill="#666"/></svg>
        <svg class="tl-btn tl-prev" width="26" height="24" viewBox="0 0 26 24"><path d="M18 0v24L0 12zM21 8h4v9h-4z" fill="#666"/></svg>
        <svg class="tl-btn tl-play" width="24" height="30" viewBox="0 0 24 30"><path d="M0 0v30L24 15z" fill="#666"/></svg>
        <svg class="tl-btn tl-next" width="26" height="24" viewBox="0 0 26 24"><path d="M8 0v24l18-12zM1 8h4v9H1z" fill="#666"/></svg>
        <svg class="tl-btn tl-last" width="22" height="24" viewBox="0 0 22 24"><path d="M19 0h3v24h-3zM0 0v24l18-12z" fill="#666"/></svg>
        <div class="tl-feature">
            <svg width="46" height="48" viewBox="0 0 46 48"><path d="M9 9h26v28H9z" fill="none" stroke="#34638f" stroke-width="1.200"/><path d="M16 14h13v10q-4 7-13 7z" fill="none" stroke="#34638f" stroke-width="1.200"/><path d="M26 34l8-9 5 4-8 9z" fill="#f5b53c"/><circle cx="36" cy="26" r="3" fill="#e6262a"/></svg>
            <span class="tl-tick"></span>
            <span class="tl-marker"></span>
        </div>
        <svg class="tl-gear" width="28" height="28" viewBox="0 0 28 28"><g fill="#777"><circle cx="14" cy="14" r="10"/><path d="M11 0h6v5h-6zM11 23h6v5h-6zM0 11h5v6H0zM23 11h5v6h-5zM3 7l4-4 4 4-4 4zM17 7l4-4 4 4-4 4zM3 21l4 4 4-4-4-4zM17 21l4 4 4-4-4-4z"/></g><circle cx="14" cy="14" r="4" fill="#f0f0f0"/></svg>
    </div>

    <svg class="annotations" width="3584" height="2240" viewBox="0 0 3584 2240">
        <path d="M1121 299L1037 210L1021 252M1037 207L1088 222"/>
        <path class="arrow-thin" d="M2690 830Q2702 775 2745 725Q2760 708 2780 704M2780 704L2735 710M2780 704L2768 746"/>
    </svg>
</body>
</html>
```
FILE: styles.css
```css
* {
    box-sizing: border-box;
}
body {
    position: relative;
    width: 3584px;
    height: 2240px;
    margin: 0;
    overflow: hidden;
    background-color: #f2f2f2;
    font-family: 'DejaVu Sans', sans-serif;
    color: #444;
}
.sprite {
    position: absolute;
    width: 0;
    height: 0;
}
.caret {
    display: inline-block;
    width: 0;
    height: 0;
    margin-left: 6px;
    border-left: 7px solid transparent;
    border-right: 7px solid transparent;
    border-top: 11px solid #666;
}
.caret-dark {
    margin-left: 4px;
    border-left-width: 5px;
    border-right-width: 5px;
    border-top: 9px solid #333;
    vertical-align: 4px;
}

/* title bar */
.titlebar {
    display: flex;
    height: 64px;
    padding-top: 8px;
    background-color: #c9c9c9;
}
.quick {
    display: flex;
    align-items: center;
    flex: none;
    width: 386px;
    height: 56px;
    padding-left: 18px;
}
.q-grid { margin-top: -4px; }
.q-file { margin-left: 39px; margin-top: -4px; }
.q-save { margin-left: 37px; margin-top: -4px; }
.q-undo { margin-left: 38px; }
.q-redo { margin-left: 24px; }
.quick .caret { margin-top: -6px; margin-left: 12px; }
.doc-tab {
    display: grid;
    grid-template-columns: 1fr auto 1fr;
    align-items: center;
    flex: none;
    width: 2769px;
    padding-right: 24px;
    background-color: #f2f2f2;
    border-top-left-radius: 10px;
    border-top-right-radius: 10px;
}
.doc-title {
    display: flex;
    align-items: center;
    gap: 11px;
    margin-top: -2px;
    font-family: 'Open Sans', sans-serif;
    font-size: 24px;
    color: #444;
}
.doc-close {
    justify-self: end;
    margin-right: -8px;
    font-size: 34px;
    line-height: 1;
    color: #666;
    margin-top: -6px;
}
.title-right {
    display: flex;
    align-items: center;
    flex: 1;
    height: 56px;
    padding-left: 7px;
}
.plus-tab {
    display: flex;
    align-items: center;
    justify-content: center;
    width: 56px;
    height: 56px;
    background-color: #b5b5b5;
    border-top-left-radius: 8px;
    border-top-right-radius: 8px;
}
.t-icon { margin-left: 34px; margin-top: -8px; }
.t-first { margin-left: 24px; }
.t-avatar { margin-left: 39px; margin-top: -4px; }

/* toolbar */
.toolbar {
    display: flex;
    height: 164px;
    margin-bottom: 5px;
    border-bottom: 2px solid #ccc;
}
.design-btn {
    flex: none;
    width: 218px;
    height: 122px;
    margin: 21px 21px 0 24px;
    font-family: 'Open Sans', sans-serif;
    font-size: 23px;
    font-weight: 600;
    color: #444;
    background-color: #f2f2f2;
    border: 2px solid #ccc;
    border-radius: 8px;
}
.design-btn .caret-dark { margin-left: 9px; }
.tabs {
    display: flex;
    gap: 40px;
    height: 47px;
    padding-left: 13px;
}
.tab {
    height: 47px;
    padding: 0 24px 0;
    font-family: 'Open Sans', sans-serif;
    font-size: 23px;
    line-height: 44px;
    color: #444;
}
.tab-active {
    width: 138px;
    padding: 0;
    text-align: center;
    color: #0696d7;
    background-color: #cce9f6;
    border-bottom: 6px solid #0696d7;
}
.ribbon {
    display: flex;
    height: 119px;
    margin-top: -3px;
}
.group {
    display: flex;
    flex-direction: column;
    align-items: center;
    padding-top: 4px;
}
.tools {
    display: flex;
}
.tool {
    display: flex;
    justify-content: center;
    width: 86px;
    height: 76px;
}
.ico {
    width: 76px;
    height: 76px;
}
.ico.active {
    background-color: #0696d7;
}
.group-label {
    margin-top: 7px;
    margin-left: -8px;
    font-family: 'Open Sans', sans-serif;
    font-size: 23px;
    line-height: 25px;
    color: #444;
    white-space: nowrap;
}
.group-constraints .group-label { margin-left: -14px; }
.group-inspect .group-label { margin-left: 4px; }
.sep {
    flex: none;
    width: 2px;
    height: 102px;
    margin-top: 9px;
    background-color: #ccc;
}
.group-create { width: 516px; margin-right: 9px; }
.group-modify { width: 344px; margin-left: 10px; margin-right: 9px; }
.group-constraints { width: 1032px; margin-left: 12px; margin-right: 8px; }
.group-inspect { width: 157px; }
.group-insert { width: 146px; }
.group-select { width: 154px; }
.group-finish { width: 216px; background-color: #cce9f6; }
.ln { fill: none; stroke: #666; stroke-width: 3; }
.ln-thin { stroke-width: 2; }
.bl { fill: none; stroke: #1e8fe6; stroke-width: 3; }
.bl-thin { stroke-width: 2; }
.sq { fill: #1e8fe6; }
.rd { fill: none; stroke: #c8282c; stroke-width: 2.5; }

/* viewport */
.viewport {
    position: relative;
    height: 1907px;
    overflow: hidden;
    background-color: #fff;
}
.canvas {
    position: absolute;
    left: 0;
    top: 0;
}
.grid-minor { stroke: #f1f1f1; stroke-width: 1; fill: none; }
.grid-major { stroke: #e4e4e4; stroke-width: 1; fill: none; }
.axis-x { stroke: #e48f8f; stroke-width: 1; }
.axis-y { stroke: #aee3ae; stroke-width: 1; }
.axis-line { stroke: #111; stroke-width: 1.5; }
.axis-guide { stroke: #a9bcd6; stroke-width: 1; }
.axis-label {
    font-family: 'Liberation Sans', sans-serif;
    font-size: 30px;
    fill: #555;
    text-anchor: middle;
    dominant-baseline: central;
}
.curve-red { fill: none; stroke: #f88b8b; stroke-width: 2.5; }
.curve-blue { fill: none; stroke: #1c78d0; stroke-width: 2.5; stroke-dasharray: 14 8; }
.curve-black { fill: none; stroke: #111; stroke-width: 2; }
.glyphs-out { fill: none; stroke: #888; stroke-width: 6.5; }
.glyphs-in { fill: none; stroke: #eee; stroke-width: 2; }
.dim { fill: none; stroke: #000; stroke-width: 1.300; }
.dim-text {
    font-family: 'Liberation Sans', sans-serif;
    font-size: 30px;
    fill: #000;
    text-anchor: middle;
}
.purple-pt { fill: #fff; stroke: #b388e0; stroke-width: 3; }
.cube-axes text {
    font-family: 'Open Sans', sans-serif;
    font-size: 30px;
    text-anchor: middle;
}
.axis-y-label { fill: #88f088; }
.axis-x-label { fill: #ff7f7f; }
.axis-z-label { fill: #8080ff; font-weight: 600; }
.view-cube {
    position: absolute;
    left: 3405px;
    top: 76px;
    width: 104px;
    height: 104px;
    padding: 19px 18px;
    background-color: #efefef;
    border: 1px solid #aaa;
    box-shadow: 0 6px 16px rgba(0, 0, 0, 0.12);
}
.view-face {
    display: flex;
    align-items: center;
    justify-content: center;
    width: 68px;
    height: 67px;
    font-family: 'Open Sans', sans-serif;
    font-size: 24px;
    font-weight: 700;
    color: #999;
    background-color: #e6e7eb;
}
.view-face span {
    margin-top: -3px;
    transform: scale(.9, 1.2);
}

/* browser */
.browser {
    position: absolute;
    left: 8px;
    top: 10px;
    width: 599px;
}
.browser-head, .comments {
    display: flex;
    align-items: center;
    height: 47px;
    background-color: #f2f2f2;
    border: 1px solid #ccc;
    border-bottom-width: 2px;
    border-right-width: 2px;
}
.head-skip { margin-left: 9px; }
.head-text {
    margin-left: 21px;
    font-family: 'Open Sans', sans-serif;
    font-size: 21.500px;
    color: #666;
}
.comments .head-text { margin-left: 50px; margin-top: 2px; }
.round-btn {
    display: flex;
    align-items: center;
    justify-content: center;
    width: 17px;
    height: 17px;
    font-size: 17px;
    font-weight: 700;
    line-height: 1;
    color: #ccc;
    background-color: #333;
    border-radius: 6px;
}
.browser-head .round-btn, .comments .round-btn {
    margin-left: auto;
    margin-right: 22px;
}
.tree {
    display: flex;
    flex-direction: column;
    gap: 8px;
    margin-top: 12px;
}
.tree-row {
    display: flex;
    align-items: center;
    height: 40px;
    font-size: 21px;
}
.level0 { padding-left: 37px; }
.level1 { padding-left: 74px; }
.level2 { padding-left: 144px; }
.twist {
    display: flex;
    align-items: center;
    width: 34px;
    height: 40px;
}
.level0 .twist { width: 35px; }
.item {
    display: flex;
    align-items: center;
    height: 40px;
    padding: 0 18px 0 6px;
    background-color: #f2f2f2;
    color: #444;
}
.eye { flex: none; color: #999; }
.eye-off { opacity: .5; }
.item-root { width: 295px; padding-right: 0; }
.item-selected {
    display: flex;
    align-items: center;
    width: 196px;
    height: 32px;
    margin-left: 12px;
    padding-left: 9px;
    color: #fff;
    font-weight: 700;
    background-color: #999;
}
.item-selected span { margin-left: 28px; }
.radio { margin-left: 9px; }
.gear + .item-text { margin-left: 25px; }
.folder-first + .item-text { margin-left: 29px; }
.folder { margin-left: 18px; }
.folder + .item-text { margin-left: 28px; }
.leaf { width: 150px; padding-right: 0; }
.leaf-wide { width: 166px; }
.leaf-icon { flex: none; margin-left: 18px; }
.leaf-icon + .item-text { margin-left: 30px; }
.item-wavy {
    position: relative;
}
.item-wavy::after {
    content: '';
    position: absolute;
    left: 49px;
    bottom: 2px;
    width: 176px;
    height: 7px;
    background-image: repeating-linear-gradient(135deg, #6f8db8 0 4px, transparent 4px 10px);
}
.comments {
    position: absolute;
    left: 8px;
    top: 1849px;
    width: 599px;
}

/* panels */
.panel {
    position: absolute;
    top: 250px;
    width: 498px;
    background-color: #f2f2f2;
    border: 1px solid #ddd;
    border-bottom: 3px solid #ccc;
}
.panel-offset { left: 2568px; }
.panel-palette { left: 3076px; }
.panel-head {
    display: flex;
    align-items: center;
    height: 46px;
    padding-left: 24px;
    border-bottom: 2px solid #ccc;
}
.panel-title {
    margin-left: 9px;
    font-family: 'Open Sans', sans-serif;
    font-size: 22.500px;
    color: #666;
}
.head-expand {
    margin-left: auto;
    margin-right: 8px;
}
.panel-body {
    padding-top: 3px;
    padding-bottom: 3px;
    border-bottom: 2px solid #ccc;
}
.form-row {
    display: flex;
    align-items: center;
    height: 60px;
    padding-left: 25px;
    font-size: 21px;
}
.form-label {
    flex: none;
    width: 189px;
}
.selected-btn {
    display: flex;
    align-items: center;
    gap: 8px;
    width: 162px;
    height: 54px;
    padding-left: 14px;
    color: #fff;
    font-size: 21px;
    background-color: #0696d7;
}
.clear-x {
    margin-left: 20px;
    font-size: 32px;
    line-height: 1;
    font-weight: 700;
    color: #555;
}
.checkbox {
    display: inline-block;
    flex: none;
    width: 25px;
    height: 25px;
    margin-top: -2px;
    background-color: #e6e6e6;
    border: 2px solid #555;
    border-radius: 5px;
    box-shadow: 0 1px 0 #fff;
}
.checkbox svg {
    display: block;
    margin: -2px;
}
.check-offset { margin-left: 10px; }
.num-input {
    display: flex;
    width: 218px;
    height: 50px;
    margin-left: 2px;
    background-color: #fff;
    border: 2px solid #ccc;
}
.num-value {
    flex: 1;
    padding-left: 6px;
    font-size: 21px;
    line-height: 44px;
}
.spinner {
    display: flex;
    flex-direction: column;
    align-items: center;
    justify-content: space-around;
    flex: none;
    width: 27px;
    padding: 6px 0;
    background-color: #e6e6e6;
}
.spin-up, .spin-down {
    width: 0;
    height: 0;
    border-left: 5px solid transparent;
    border-right: 5px solid transparent;
}
.spin-up { border-bottom: 7px solid #222; }
.spin-down { border-top: 7px solid #222; }
.flip { margin-left: 10px; }
.panel-foot {
    display: flex;
    align-items: center;
}
.panel-foot-offset {
    height: 66px;
    padding-left: 30px;
}
.btn {
    font-family: 'DejaVu Sans', sans-serif;
    font-size: 23px;
    color: #666;
    background-color: #ececec;
    border: 2px solid #ccc;
    padding: 0;
}
.btn-ok {
    width: 119px;
    height: 36px;
    margin-left: 146px;
}
.btn-cancel {
    width: 118px;
    height: 36px;
    margin-left: 37px;
}
.panel-foot-palette {
    justify-content: flex-end;
    height: 66px;
    padding-right: 22px;
}
.btn-finish {
    width: 166px;
    height: 37px;
}
.palette-row .form-label { width: 301px; }
.options-row b { margin-left: 14px; color: #444; font-size: 20px; }
.options-tri {
    width: 0;
    height: 0;
    margin-left: -2px;
    border-left: 8px solid transparent;
    border-right: 8px solid transparent;
    border-top: 11px solid #333;
}
.linetype { margin-left: -4px; }
.linetype-2 { margin-left: 26px; }
.lookat { margin-left: -2px; }
.float-input {
    position: absolute;
    left: 2042px;
    top: 595px;
    width: 181px;
    height: 44px;
    margin: 0;
    border-left: none;
    border-width: 3px;
}
.grip {
    flex: none;
    width: 28px;
    background-color: #f0f0f0;
    border-right: 4px solid #ccc;
}
.float-input .num-value { line-height: 38px; }
.nav-bar {
    position: absolute;
    left: 1556px;
    top: 1847px;
    display: flex;
    align-items: center;
    width: 474px;
    height: 48px;
    padding-left: 8px;
    background-color: #f0f0f0;
}
.nav-bar .caret-nav {
    margin-left: 11px;
    border-left-width: 6px;
    border-right-width: 6px;
    border-top-width: 9px;
    border-top-color: #333;
}
.nav-look { margin-left: 15px; }
.nav-hand { margin-left: 24px; }
.nav-zoom { margin-left: 23px; }
.nav-fit { margin-left: 19px; }
.nav-display { margin-left: 13px; }
.nav-gridicon { margin-left: 13px; }
.nav-views { margin-left: 13px; }
.mode-text {
    position: absolute;
    left: 3488px;
    top: 1865px;
    font-family: 'Open Sans', sans-serif;
    font-size: 22px;
    font-weight: 600;
    color: #333;
}

/* timeline */
.timeline-progress {
    height: 6px;
    background-color: #dedede;
}
.timeline-done {
    display: block;
    width: 270px;
    height: 6px;
    background-color: #c9c9c9;
}
.timeline {
    display: flex;
    align-items: flex-start;
    height: 94px;
    background-color: #f0f0f0;
    padding-top: 36px;
}
.tl-first { margin-left: 22px; }
.tl-prev { margin-left: 26px; }
.tl-play { margin-left: 26px; margin-top: -4px; }
.tl-next { margin-left: 24px; }
.tl-last { margin-left: 27px; }
.tl-feature {
    position: relative;
    width: 46px;
    height: 48px;
    margin-left: 39px;
    margin-top: -14px;
    background-color: #0696d7;
    border-radius: 4px;
}
.tl-tick {
    position: absolute;
    left: 24px;
    top: 48px;
    width: 3px;
    height: 12px;
    background-color: #ccc;
}
.tl-marker {
    position: absolute;
    left: 46px;
    top: -4px;
    width: 4px;
    height: 64px;
    background-color: #666;
}
.tl-marker::before {
    content: '';
    position: absolute;
    left: -10px;
    top: 0;
    border-left: 12px solid transparent;
    border-right: 12px solid transparent;
    border-top: 18px solid #666;
}
.tl-gear {
    margin-left: auto;
    margin-right: 30px;
    margin-top: 4px;
}

/* red hand drawn arrows */
.annotations {
    position: absolute;
    left: 0;
    top: 0;
    pointer-events: none;
    fill: none;
    stroke: #ea3f20;
    stroke-width: 7;
    stroke-linecap: round;
    stroke-linejoin: round;
}
.annotations .arrow-thin { stroke-width: 5; }
```
